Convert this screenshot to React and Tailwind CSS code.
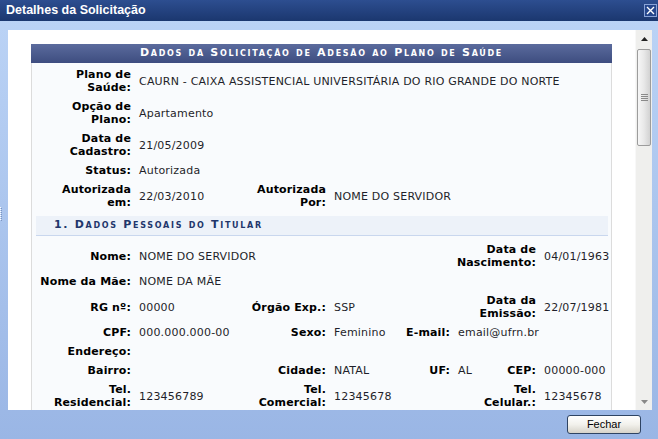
import React from 'react';
import clsx from 'clsx';

const ROW = "grid grid-cols-[103px_111px_84px_72px_52px_33px_53px_73px] items-center";

const Label = ({ children, className }) => (
    <div className={clsx("text-right font-bold pr-1 py-[3px] leading-[13px] whitespace-nowrap tracking-[0.15px] text-black", className)}>
        {children}
    </div>
);

const Value = ({ children, className }) => (
    <div className={clsx("pl-1 py-[3px] leading-[13px] whitespace-nowrap tracking-[0.2px] text-[#1f1f2a]", className)}>
        {children}
    </div>
);

const SubHeader = ({ children }) => (
    <div className="ml-1 mr-[3px] my-1 h-5 bg-[#edf2f9] border-b border-[#c9d7ee] flex items-center pl-[18px] text-[11px] font-bold tracking-[1.7px] text-[#22366b] [font-variant:small-caps]">
        {children}
    </div>
);

const Arrow = ({ up }) => (
    <svg width="7" height="4" viewBox="0 0 7 4">
        <path d={up ? "M0 4 L3.5 0 L7 4 Z" : "M0 0 L3.5 4 L7 0 Z"} fill={up ? "#222" : "#888"} />
    </svg>
);

const Scrollbar = () => (
    <div className="w-[17px] h-full bg-[#efefed] border-l border-[#f8f8f8] flex flex-col">
        <div className="h-[17px] flex items-center justify-center">
            <Arrow up />
        </div>
        <div className="mt-[2px] mx-px h-[97px] rounded-[2px] border border-[#9c9c9c] bg-gradient-to-r from-[#f6f6f6] via-[#e8e8e8] to-[#d2d2d2] flex items-center justify-center">
            <div className="flex flex-col gap-px">
                <div className="w-[7px] h-px bg-[#8a8a8a]" />
                <div className="w-[7px] h-px bg-[#8a8a8a]" />
                <div className="w-[7px] h-px bg-[#8a8a8a]" />
                <div className="w-[7px] h-px bg-[#8a8a8a]" />
            </div>
        </div>
        <div className="flex-1" />
        <div className="h-[17px] flex items-center justify-center">
            <Arrow />
        </div>
    </div>
);

export default function App() {
    return (
        <div className="relative w-[658px] h-[439px] overflow-hidden bg-gradient-to-b from-[#bcd4f6] to-[#9ab6e5] font-['DejaVu_Sans',sans-serif]">
            {/* title bar */}
            <div className="h-[21px] bg-gradient-to-b from-[#2d4e90] to-[#1b376f] flex items-center justify-between pl-[6px] pr-px">
                <span className="text-white font-bold text-[12.5px] font-['Liberation_Sans',sans-serif]">Detalhes da Solicitação</span>
                <div className="w-[13px] h-[13px] border border-[#89a3d6] bg-[#25468c] flex items-center justify-center">
                    <svg width="9" height="9" viewBox="0 0 9 9">
                        <path d="M1 1 L8 8 M8 1 L1 8" stroke="white" strokeWidth="1.4" />
                    </svg>
                </div>
            </div>

            {/* resize grip on the left edge */}
            <svg className="absolute left-0 top-[207px]" width="3" height="15" viewBox="0 0 3 15">
                {[0, 2, 4, 6, 8, 10, 12].map((y) => (
                    <g key={y}>
                        <rect x="0" y={y} width="1" height="1" fill="#ffffff" />
                        <rect x="1" y={y + 1} width="1" height="1" fill="#7d95c0" />
                    </g>
                ))}
            </svg>

            <div className="pt-[9px] pl-2 pr-[6px]">
                <div className="h-[380px] bg-white flex">
                    <div className="flex-1 overflow-hidden pt-[14px] pl-[23px]">
                        <div className="w-[581px] text-[11px]">
                            <div className="h-[19px] bg-gradient-to-b from-[#5b6b9d] to-[#3e4d80] flex items-center justify-center text-white font-bold text-[11px] tracking-[1.7px] [font-variant:small-caps]">
                                Dados da Solicitação de Adesão ao Plano de Saúde
                            </div>
                            <div className="bg-[#f9fbfd] border-l border-r border-[#dcdcdc] pt-[2px]">
                                <div className={ROW}>
                                    <Label>Plano de<br />Saúde:</Label>
                                    <Value className="col-span-7">CAURN - CAIXA ASSISTENCIAL UNIVERSITÁRIA DO RIO GRANDE DO NORTE</Value>
                                </div>
                                <div className={ROW}>
                                    <Label>Opção de<br />Plano:</Label>
                                    <Value className="col-span-7">Apartamento</Value>
                                </div>
                                <div className={ROW}>
                                    <Label>Data de<br />Cadastro:</Label>
                                    <Value className="col-span-7">21/05/2009</Value>
                                </div>
                                <div className={ROW}>
                                    <Label>Status:</Label>
                                    <Value className="col-span-7">Autorizada</Value>
                                </div>
                                <div className={ROW}>
                                    <Label>Autorizada<br />em:</Label>
                                    <Value>22/03/2010</Value>
                                    <Label>Autorizada<br />Por:</Label>
                                    <Value className="col-span-5">NOME DO SERVIDOR</Value>
                                </div>

                                <SubHeader>1. Dados Pessoais do Titular</SubHeader>

                                <div className={ROW}>
                                    <Label>Nome:</Label>
                                    <Value className="col-span-3">NOME DO SERVIDOR</Value>
                                    <Label className="col-start-5 col-span-3">Data de<br />Nascimento:</Label>
                                    <Value>04/01/1963</Value>
                                </div>
                                <div className={ROW}>
                                    <Label>Nome da Mãe:</Label>
                                    <Value className="col-span-7">NOME DA MÃE</Value>
                                </div>
                                <div className={ROW}>
                                    <Label>RG nº:</Label>
                                    <Value>00000</Value>
                                    <Label>Órgão Exp.:</Label>
                                    <Value>SSP</Value>
                                    <Label className="col-start-6 col-span-2">Data da<br />Emissão:</Label>
                                    <Value>22/07/1981</Value>
                                </div>
                                <div className={ROW}>
                                    <Label>CPF:</Label>
                                    <Value>000.000.000-00</Value>
                                    <Label>Sexo:</Label>
                                    <Value>Feminino</Value>
                                    <Label>E-mail:</Label>
                                    <Value className="col-span-3">email@ufrn.br</Value>
                                </div>
                                <div className={ROW}>
                                    <Label>Endereço:</Label>
                                    <Value className="col-span-7" />
                                </div>
                                <div className={ROW}>
                                    <Label>Bairro:</Label>
                                    <Value />
                                    <Label>Cidade:</Label>
                                    <Value>NATAL</Value>
                                    <Label>UF:</Label>
                                    <Value>AL</Value>
                                    <Label>CEP:</Label>
                                    <Value>00000-000</Value>
                                </div>
                                <div className={ROW}>
                                    <Label>Tel.<br />Residencial:</Label>
                                    <Value>123456789</Value>
                                    <Label>Tel.<br />Comercial:</Label>
                                    <Value className="col-span-2">12345678</Value>
                                    <Label className="col-span-2">Tel.<br />Celular.:</Label>
                                    <Value>12345678</Value>
                                </div>
                            </div>
                        </div>
                    </div>
                    <Scrollbar />
                </div>

                <div className="flex justify-end pr-[11px] mt-[5px]">
                    <button className="w-[74px] h-[19px] rounded-[3px] border border-[#2f4463] bg-gradient-to-b from-[#ffffff] via-[#f2f1ec] to-[#d6d3c9] text-[11px] text-black font-['Liberation_Sans',sans-serif] leading-none">
                        Fechar
                    </button>
                </div>
            </div>
        </div>
    );
}
